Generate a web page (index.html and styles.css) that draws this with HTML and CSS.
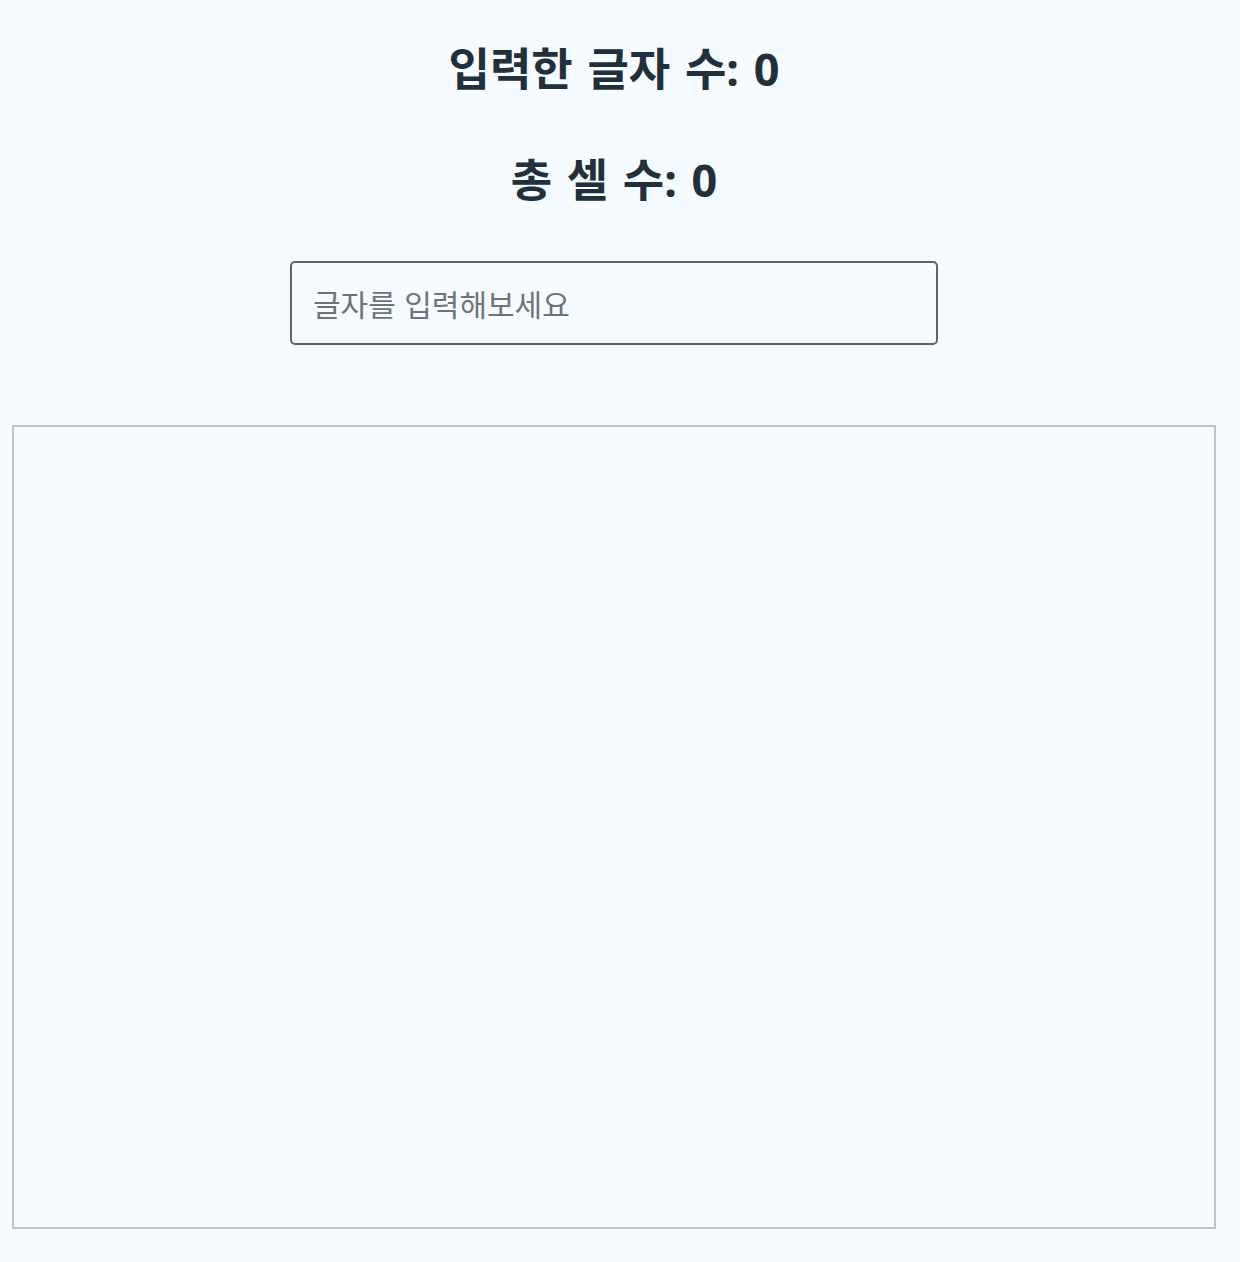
FILE: index.html
```html
<!DOCTYPE html>
<html lang="ko">
<head>
<meta charset="utf-8">
<title>글자 수</title>
<link rel="stylesheet" href="styles.css">
</head>
<body>
<main class="page">
  <h1 class="count">입력한 글자 수: 0</h1>
  <h1 class="count count-cells">총 셀 수: 0</h1>
  <div class="input-row">
    <input class="text-input" type="text" placeholder="글자를 입력해보세요">
  </div>
  <div class="board"></div>
</main>
</body>
</html>
```

FILE: styles.css
```css
html, body {
  margin: 0;
  padding: 0;
  background: #f5fbfe;
}
body {
  font-family: "Noto Sans", "Noto Sans CJK KR", sans-serif;
  color: #22303c;
}
.page {
  margin: 0 24px 0 12px;
  padding-top: 42px;
  display: flex;
  flex-direction: column;
  align-items: center;
}
.count {
  margin: 0;
  font-size: 45px;
  line-height: 54px;
  font-weight: 700;
  word-spacing: 3px;
  text-align: center;
}
.count-cells {
  margin-top: 57px;
}
.input-row {
  margin-top: 54px;
  width: 100%;
  display: flex;
  justify-content: center;
}
.text-input {
  box-sizing: border-box;
  width: 648px;
  height: 84px;
  padding: 0 21px;
  border: 2px solid #5f6368;
  border-radius: 5px;
  background: #f5fbfe;
  font-family: "Noto Sans CJK KR", "Noto Sans", sans-serif;
  font-size: 30px;
  color: #22303c;
  outline: none;
}
.text-input::placeholder {
  color: #6d7378;
}
.board {
  box-sizing: border-box;
  margin-top: 80px;
  width: 100%;
  height: 804px;
  border: 2px solid #bfc4c8;
}
```
